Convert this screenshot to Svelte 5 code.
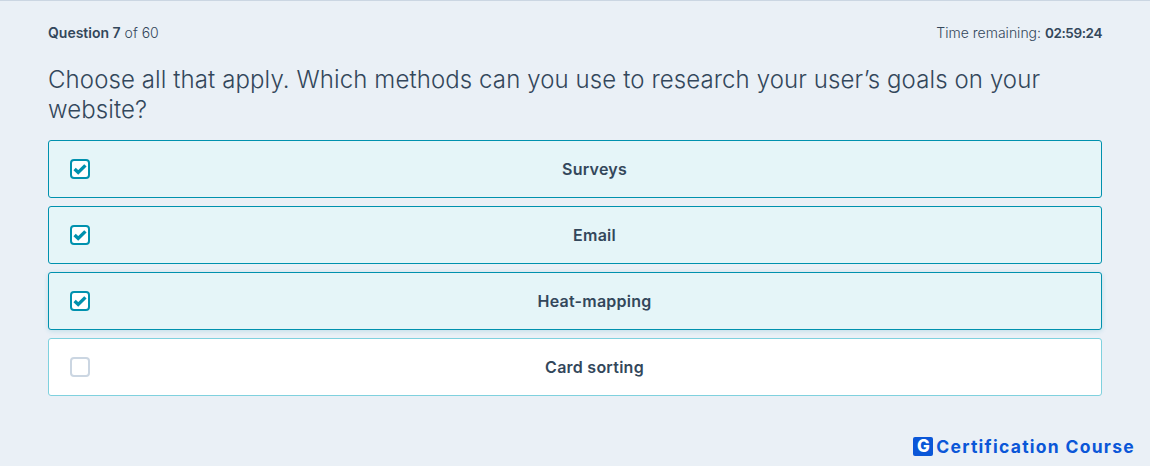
<script>
  const options = [
    { label: 'Surveys', checked: true },
    { label: 'Email', checked: true },
    { label: 'Heat-mapping', checked: true, hover: true },
    { label: 'Card sorting', checked: false }
  ];
</script>

<div class="page">
  <header class="top">
    <div><strong>Question 7</strong> of 60</div>
    <div>Time remaining: <strong class="clock">02:59:24</strong></div>
  </header>
  <h1>Choose all that apply. Which methods can you use to research your user’s goals on your website?</h1>
  <div class="options">
    {#each options as o}
      <div class="option" class:checked={o.checked} class:hover={o.hover}>
        <span class="box">
          {#if o.checked}
            <svg width="14" height="12" viewBox="0 0 14 12"><path d="M1.6 6 L5.2 9.4 L12.4 2.4" fill="none" stroke="#0091ae" stroke-width="3.4"/></svg>
          {/if}
        </span>
        <span class="label">{o.label}</span>
      </div>
    {/each}
  </div>
  <footer class="brand">
    <span class="logo">G</span><span class="brandtext">Certification Course</span>
  </footer>
</div>

<style>
  :global(body) { margin: 0; background: #eaf0f6; }
  .page {
    height: 466px;
    box-sizing: border-box;
    border-top: 1px solid #cbd6e2;
    padding: 23px 48px 0;
    font-family: Inter, "Noto Sans", sans-serif;
    color: #33475b;
    display: flex;
    flex-direction: column;
    position: relative;
  }
  .top {
    display: flex;
    justify-content: space-between;
    font-size: 14px;
    font-weight: 300;
    line-height: 17px;
  }
  strong { font-weight: 600; }
  .clock { font-size: 13.5px; letter-spacing: -0.4px; }
  h1 {
    font-weight: 300;
    font-size: 24px;
    line-height: 30px;
    margin: 23px 0 15px;
    letter-spacing: 0.1px;
  }
  .options { display: flex; flex-direction: column; gap: 8px; }
  .option {
    height: 58px;
    box-sizing: border-box;
    background: #fff;
    border: 1px solid #7fd1de;
    border-radius: 3px;
    display: flex;
    align-items: center;
    padding: 0 2px 0 21px;
  }
  .option.checked { background: #e5f5f8; border-color: #0091ae; }
  .option.hover { box-shadow: 0 1px 5px rgba(0, 145, 174, 0.2); }
  .box {
    width: 20px;
    height: 20px;
    box-sizing: border-box;
    border: 2px solid #cbd6e2;
    border-radius: 4px;
    background: #fff;
    display: flex;
    align-items: center;
    justify-content: center;
    flex: none;
  }
  .checked .box { border-color: #0091ae; }
  .label { flex: 1; text-align: center; font-size: 16px; font-weight: 600; letter-spacing: 0.25px; }
  .brand {
    position: absolute;
    right: 15px;
    bottom: 9px;
    display: flex;
    align-items: center;
    gap: 3px;
  }
  .logo {
    width: 20px;
    height: 19px;
    background: #0b57d8;
    color: #fff;
    border-radius: 2px;
    font-weight: 800;
    font-size: 17px;
    line-height: 19px;
    text-align: center;
  }
  .brandtext {
    font-weight: 700;
    font-size: 17.5px;
    color: #0b57d8;
    letter-spacing: 1.27px;
  }
</style>
